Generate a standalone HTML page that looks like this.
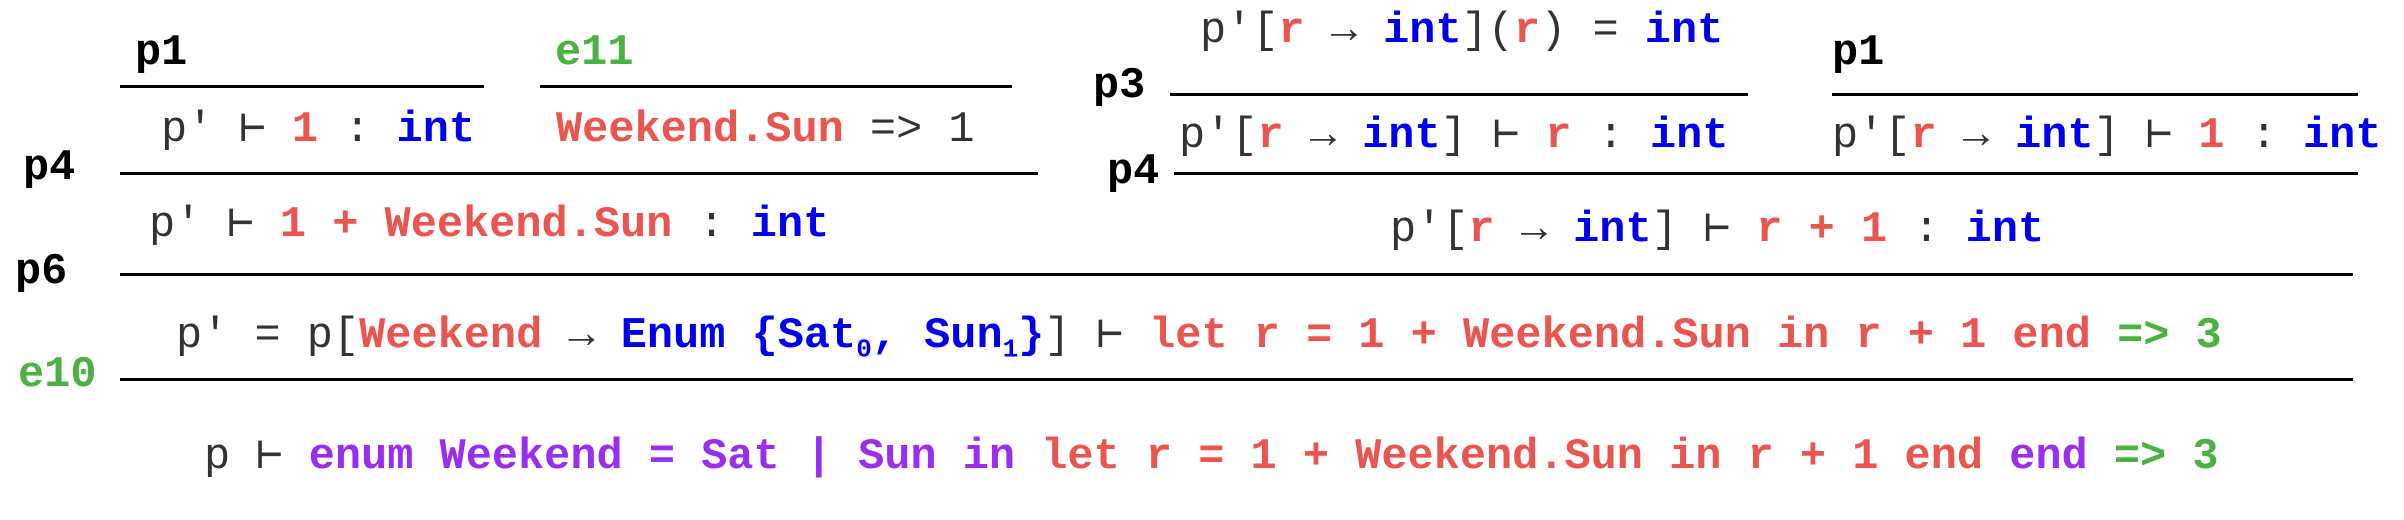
<!DOCTYPE html>
<html><head><meta charset="utf-8"><style>
html,body{margin:0;padding:0;background:#fff;width:2404px;height:520px;overflow:hidden;position:relative}
.t{position:absolute;font-family:"Liberation Mono","DejaVu Sans Mono",monospace;font-size:43.6px;line-height:42px;white-space:pre;color:#333}
.l{position:absolute;height:3px;background:#000}
.r{color:#ea5550;font-weight:bold}
.u{color:#0000ee;font-weight:bold}
.g{color:#4cb140;font-weight:bold}
.v{color:#9a2ef0;font-weight:bold}
.k{color:#000;font-weight:bold}
sub{font-size:26px;line-height:0}
</style></head><body>
<div class="t k" style="left:135px;top:33px">p1</div>
<div class="l" style="left:120px;top:85px;width:364px"></div>
<div class="t g" style="left:555px;top:33px">e11</div>
<div class="l" style="left:540px;top:85px;width:472px"></div>
<div class="t" style="left:161px;top:110px">p′ ⊢ <span class="r">1</span> : <span class="u">int</span></div>
<div class="t" style="left:556px;top:110px"><span class="r">Weekend.Sun</span> =&gt; 1</div>
<div class="t k" style="left:23px;top:148px">p4</div>
<div class="l" style="left:120px;top:172px;width:918px"></div>
<div class="t" style="left:149px;top:205px">p′ ⊢ <span class="r">1 + Weekend.Sun</span> : <span class="u">int</span></div>
<div class="t k" style="left:15px;top:252px">p6</div>
<div class="l" style="left:120px;top:273px;width:2233px"></div>
<div class="t" style="left:176px;top:316px">p′ = p[<span class="r">Weekend</span> → <span class="u">Enum {Sat<sub>0</sub>, Sun<sub>1</sub>}</span>] ⊢ <span class="r">let r = 1 + Weekend.Sun in r + 1 end</span> <span class="g">=&gt; 3</span></div>
<div class="t g" style="left:18px;top:355px">e10</div>
<div class="l" style="left:120px;top:378px;width:2233px"></div>
<div class="t" style="left:204px;top:437px">p ⊢ <span class="v">enum Weekend = Sat | Sun in</span> <span class="r">let r = 1 + Weekend.Sun in r + 1 end</span> <span class="v">end</span> <span class="g">=&gt; 3</span></div>

<div class="t" style="left:1200px;top:11px">p′[<span class="r">r</span> → <span class="u">int</span>](<span class="r">r</span>) = <span class="u">int</span></div>
<div class="t k" style="left:1093px;top:66px">p3</div>
<div class="l" style="left:1170px;top:93px;width:578px"></div>
<div class="t k" style="left:1832px;top:33px">p1</div>
<div class="l" style="left:1832px;top:93px;width:526px"></div>
<div class="t" style="left:1179px;top:116px">p′[<span class="r">r</span> → <span class="u">int</span>] ⊢ <span class="r">r</span> : <span class="u">int</span></div>
<div class="t" style="left:1832px;top:116px">p′[<span class="r">r</span> → <span class="u">int</span>] ⊢ <span class="r">1</span> : <span class="u">int</span></div>
<div class="t k" style="left:1107px;top:152px">p4</div>
<div class="l" style="left:1174px;top:172px;width:1184px"></div>
<div class="t" style="left:1390px;top:210px">p′[<span class="r">r</span> → <span class="u">int</span>] ⊢ <span class="r">r + 1</span> : <span class="u">int</span></div>
</body></html>
